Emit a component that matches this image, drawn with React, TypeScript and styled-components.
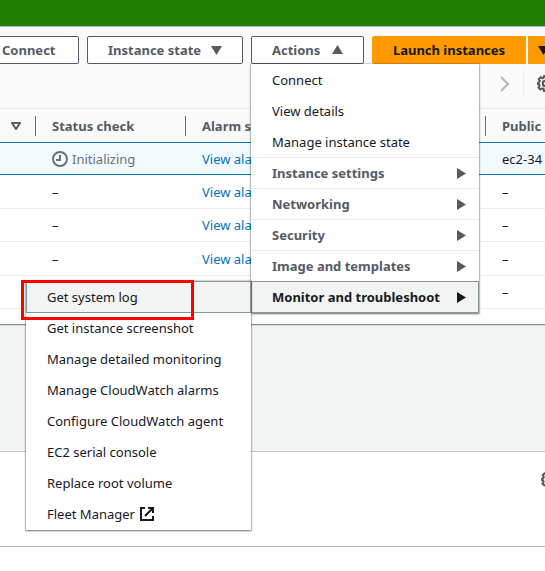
import React from "react";
import styled, { createGlobalStyle, css } from "styled-components";

const GlobalStyle = createGlobalStyle`
  *, *::before, *::after { box-sizing: border-box; }
  body {
    margin: 0;
    background: #ffffff;
    color: #16191f;
    font-family: "Noto Sans", "Open Sans", sans-serif;
    font-size: 13px;
    line-height: 20px;
  }
  button { font: inherit; color: inherit; cursor: pointer; }
`;

const Page = styled.div`
  min-height: 100vh;
  overflow: hidden;
`;

const Banner = styled.header`
  height: 27px;
  background: #1d8102;
  border-bottom: 1px solid #aab7b8;
`;

const Panel = styled.section`
  background: #fafafa;
`;

const Toolbar = styled.div`
  display: flex;
  gap: 8px;
  padding-top: 9px;
  white-space: nowrap;
`;

const Button = styled.button<{ $width: number; $cut?: boolean }>`
  display: flex;
  align-items: center;
  justify-content: space-between;
  flex: none;
  width: ${(p) => p.$width}px;
  height: 28px;
  padding: 0 20px;
  background: #ffffff;
  border: 1px solid #545b64;
  border-radius: 2px;
  color: #545b64;
  font-weight: 700;
  ${(p) =>
    p.$cut &&
    css`
      border-left: 0;
      border-radius: 0 2px 2px 0;
      padding-left: 2px;
    `}
`;

const SplitButton = styled.div`
  display: flex;
  gap: 2px;
`;

const PrimaryButton = styled(Button)<{ $end?: boolean }>`
  justify-content: center;
  padding: 0;
  background: #ff9900;
  border-color: #ff9900;
  border-radius: ${(p) => (p.$end ? "0 2px 2px 0" : "2px 0 0 2px")};
  color: #16191f;
`;

const MenuAnchor = styled.div`
  position: relative;
  z-index: 2;
  flex: none;
`;

const menuSurface = css`
  position: absolute;
  margin: 0;
  padding: 0;
  list-style: none;
  background: #ffffff;
  box-shadow: 0 1px 2px 0 rgba(0, 28, 36, 0.5), 0 0 1px 1px rgba(0, 28, 36, 0.15);
`;

const Menu = styled.ul`
  ${menuSurface}
  top: 100%;
  left: 0;
  width: 228px;
`;

const Submenu = styled.ul`
  ${menuSurface}
  top: -1px;
  right: 100%;
  width: 225px;
  padding-bottom: 1px;
`;

const Item = styled.li<{ $group?: boolean }>`
  position: relative;
  border-top: ${(p) => (p.$group ? "1px solid #eaeded" : "0")};
`;

const ItemButton = styled.button<{ $group?: boolean; $active?: boolean }>`
  display: flex;
  align-items: center;
  gap: 5px;
  width: 100%;
  height: ${(p) => (p.$group ? 30 : 31)}px;
  padding: 0 13px 0 21px;
  border: 0;
  background: transparent;
  text-align: left;
  white-space: nowrap;
  ${(p) =>
    p.$group &&
    css`
      justify-content: space-between;
      color: #545b64;
      font-weight: 700;
    `}
  ${(p) =>
    p.$active &&
    css`
      height: 32px;
      margin: ${p.$group ? "-1px 0 0" : "0 0 -1px"};
      background: #f2f3f3;
      box-shadow: inset 0 0 0 1px #879596;
      color: #16191f;
    `}
`;

const Highlight = styled.div`
  position: absolute;
  top: -1px;
  left: -5px;
  width: 173px;
  height: 40px;
  border: 3px solid #ff0000;
  pointer-events: none;
`;

const Pager = styled.div`
  display: flex;
  justify-content: flex-end;
  align-items: center;
  height: 44px;
  padding-bottom: 5px;
  margin-right: -9px;
`;

const IconButton = styled.button`
  display: flex;
  flex: none;
  padding: 0;
  border: 0;
  background: transparent;
`;

const Divider = styled.span`
  width: 1px;
  height: 27px;
  margin: 0 13px;
  background: #eaeded;
`;

const TableBox = styled.div`
  padding-bottom: 15px;
  background: #ffffff;
  border-bottom: 1px solid #879596;
`;

const Table = styled.table`
  width: 100%;
  table-layout: fixed;
  border-collapse: separate;
  border-spacing: 0;
  white-space: nowrap;
`;

const Col = styled.col<{ $w?: number }>`
  width: ${(p) => (p.$w ? `${p.$w}px` : "auto")};
`;

const Th = styled.th`
  height: 35px;
  padding: 0;
  background: #fafafa;
  border-top: 1px solid #eaeded;
  border-bottom: 1px solid #0073bb;
  color: #545b64;
  font-weight: 700;
  text-align: left;
`;

const HeadCell = styled.div<{ $last?: boolean }>`
  display: flex;
  align-items: center;
  height: 20px;
  padding-left: 16px;
  border-right: ${(p) => (p.$last ? "0" : "1px solid #687078")};
`;

const SortCell = styled(HeadCell)`
  padding-left: 11px;
`;

const Row = styled.tr<{ $selected: boolean }>`
  height: ${(p) => (p.$selected ? 32 : 33)}px;
  background: ${(p) => (p.$selected ? "#f1faff" : "#ffffff")};

  &:nth-child(even) {
    height: 34px;
  }

  td {
    padding: 0 0 0 16px;
    border-bottom: 1px solid ${(p) => (p.$selected ? "#0073bb" : "#eaeded")};
  }
`;

const Link = styled.a`
  color: #0073bb;
  text-decoration: none;
`;

const Status = styled.span`
  display: flex;
  align-items: center;
  gap: 4px;
  color: #687078;
`;

const SplitArea = styled.div`
  height: 127px;
  background: #f2f3f3;
  border-top: 1px solid #d5dbdb;
  border-bottom: 1px solid #bfc6c6;
`;

const Details = styled.section`
  display: flex;
  justify-content: flex-end;
  height: 95px;
  padding-top: 19px;
  margin-right: -13px;
  border-bottom: 1px solid #aab7b8;
`;

type Direction = "up" | "down" | "right";

const triangles: Record<Direction, string> = {
  up: "M0 9 5.5 0 11 9Z",
  down: "M0 1H11L5.5 10Z",
  right: "M2 0 11 5.5 2 11Z",
};

function Triangle({ direction }: { direction: Direction }) {
  return (
    <svg width="11" height="11" viewBox="0 0 11 11" aria-hidden="true">
      <path d={triangles[direction]} fill="currentColor" />
    </svg>
  );
}

function Gear() {
  return (
    <svg width="17" height="17" viewBox="0 0 16 16" fill="none" stroke="#545b64" strokeWidth="2" aria-hidden="true">
      <path
        strokeLinejoin="round"
        d="M6.600 1h2.800l.4 1.900 1.300.6 1.700-1 1.800 1.900-1 1.700.5 1.200 1.900.4v2.500l-1.900.4-.5 1.200 1 1.700-1.800 1.800-1.700-1-1.300.5L9.400 15H6.600l-.4-1.900-1.300-.5-1.700 1-1.800-1.800 1-1.700L1.900 9 1 8.700V7.200l1.100-.4.5-1.200-1-1.700 1.800-1.800 1.600 1 1.200-.5Z"
      />
      <circle cx="8" cy="8" r="2.500" />
    </svg>
  );
}

function Clock() {
  return (
    <svg width="16" height="16" viewBox="0 0 16 16" fill="none" stroke="currentColor" strokeWidth="2" aria-hidden="true">
      <circle cx="8" cy="8" r="7" />
      <path d="M8 4v5H4" />
    </svg>
  );
}

function External() {
  return (
    <svg width="14" height="14" viewBox="0 0 14 14" fill="none" stroke="currentColor" strokeWidth="2" aria-hidden="true">
      <path d="M5 1H1v12h12V9M8 1h5v5M13 1 5 9" />
    </svg>
  );
}

const actions = ["Connect", "View details", "Manage instance state"];
const groups = ["Instance settings", "Networking", "Security", "Image and templates"];
const troubleshooting = [
  "Get system log",
  "Get instance screenshot",
  "Manage detailed monitoring",
  "Manage CloudWatch alarms",
  "Configure CloudWatch agent",
  "EC2 serial console",
  "Replace root volume",
  "Fleet Manager",
];
const rows = [
  { status: "Initializing", dns: "ec2-34", selected: true },
  { status: "–", dns: "–", selected: false },
  { status: "–", dns: "–", selected: false },
  { status: "–", dns: "–", selected: false },
  { status: "", dns: "–", selected: false },
];

function ActionsMenu() {
  return (
    <Menu>
      {actions.map((label) => (
        <Item key={label}>
          <ItemButton>{label}</ItemButton>
        </Item>
      ))}
      {groups.map((label) => (
        <Item key={label} $group>
          <ItemButton $group>
            {label}
            <Triangle direction="right" />
          </ItemButton>
        </Item>
      ))}
      <Item $group>
        <ItemButton $group $active aria-expanded="true">
          Monitor and troubleshoot
          <Triangle direction="right" />
        </ItemButton>
        <Submenu>
          {troubleshooting.map((label, i) => (
            <Item key={label}>
              <ItemButton $active={i === 0}>
                {label}
                {label === "Fleet Manager" && <External />}
              </ItemButton>
              {i === 0 && <Highlight />}
            </Item>
          ))}
        </Submenu>
      </Item>
    </Menu>
  );
}

export default function App() {
  return (
    <Page>
      <GlobalStyle />
      <Banner />
      <Panel>
        <Toolbar>
          <Button $cut $width={79}>
            Connect
          </Button>
          <Button $width={156}>
            Instance state
            <Triangle direction="down" />
          </Button>
          <MenuAnchor>
            <Button $width={113} aria-expanded="true">
              Actions
              <Triangle direction="up" />
            </Button>
            <ActionsMenu />
          </MenuAnchor>
          <SplitButton>
            <PrimaryButton $width={154}>Launch instances</PrimaryButton>
            <PrimaryButton $end $width={31} aria-label="More launch options">
              <Triangle direction="down" />
            </PrimaryButton>
          </SplitButton>
        </Toolbar>
        <Pager>
          <IconButton aria-label="Next page">
            <svg width="10" height="16" viewBox="0 0 10 16" fill="none" stroke="#aab7b8" strokeWidth="2">
              <path d="M1 1l7 7-7 7" />
            </svg>
          </IconButton>
          <Divider />
          <IconButton aria-label="Preferences">
            <Gear />
          </IconButton>
        </Pager>
        <TableBox>
          <Table>
            <colgroup>
              <Col $w={36} />
              <Col $w={150} />
              <Col $w={300} />
              <Col />
            </colgroup>
            <thead>
              <tr>
                <Th>
                  <SortCell>
                    <svg width="10" height="8" viewBox="0 0 10 8" fill="none" stroke="currentColor" strokeWidth="2">
                      <path d="M1 1h8L5 7Z" />
                    </svg>
                  </SortCell>
                </Th>
                <Th>
                  <HeadCell>Status check</HeadCell>
                </Th>
                <Th>
                  <HeadCell>Alarm status</HeadCell>
                </Th>
                <Th>
                  <HeadCell $last>Public</HeadCell>
                </Th>
              </tr>
            </thead>
            <tbody>
              {rows.map((row, i) => (
                <Row key={i} $selected={row.selected}>
                  <td />
                  <td>
                    {row.selected ? (
                      <Status>
                        <Clock />
                        {row.status}
                      </Status>
                    ) : (
                      row.status
                    )}
                  </td>
                  <td>
                    <Link href="#alarms">View alarms</Link>
                  </td>
                  <td>{row.dns}</td>
                </Row>
              ))}
            </tbody>
          </Table>
        </TableBox>
      </Panel>
      <SplitArea />
      <Details>
        <IconButton aria-label="Panel settings">
          <Gear />
        </IconButton>
      </Details>
    </Page>
  );
}
